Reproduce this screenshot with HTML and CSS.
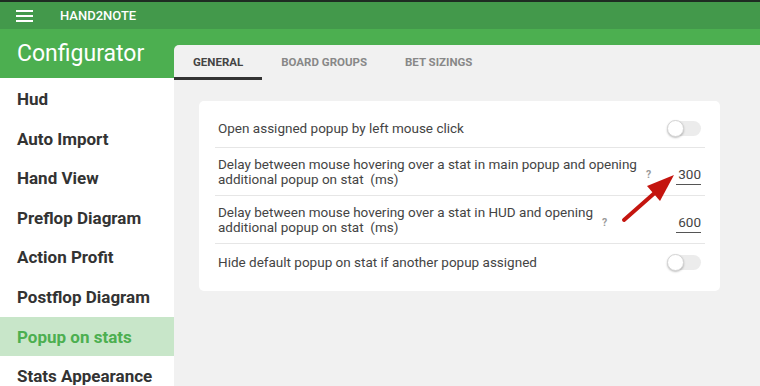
FILE: index.html
```html
<!DOCTYPE html>
<html lang="en">
<head>
    <meta charset="UTF-8">
    <title>Hand2Note - Configurator</title>
    <link rel="stylesheet" href="styles.css">
</head>
<body>
    <div class="strip"></div>
    <header class="appbar">
        <span class="burger"><i></i><i></i><i></i></span>
        <span class="brand">HAND2NOTE</span>
    </header>

    <div class="main">
        <aside class="sidebar">
            <h1 class="title">Configurator</h1>
            <nav class="nav">
                <a class="nav-item">Hud</a>
                <a class="nav-item">Auto Import</a>
                <a class="nav-item">Hand View</a>
                <a class="nav-item">Preflop Diagram</a>
                <a class="nav-item">Action Profit</a>
                <a class="nav-item">Postflop Diagram</a>
                <a class="nav-item active">Popup on stats</a>
                <a class="nav-item">Stats Appearance</a>
            </nav>
        </aside>

        <section class="content">
            <div class="head">
                <div class="tabs">
                    <span class="tab active">General</span>
                    <span class="tab">Board Groups</span>
                    <span class="tab">Bet Sizings</span>
                </div>
            </div>

            <div class="body">
                <div class="card">
                    <div class="row">
                        <span class="label">Open assigned popup by left mouse click</span>
                        <span class="toggle"></span>
                    </div>
                    <div class="row tall">
                        <span class="label">Delay between mouse hovering over a stat in main popup and opening<br>additional popup on stat&nbsp; (ms)</span>
                        <span class="help">?</span>
                        <span class="num">300</span>
                    </div>
                    <div class="row tall">
                        <span class="label">Delay between mouse hovering over a stat in HUD and opening<br>additional popup on stat&nbsp; (ms)</span>
                        <span class="help">?</span>
                        <span class="num">600</span>
                    </div>
                    <div class="row">
                        <span class="label">Hide default popup on stat if another popup assigned</span>
                        <span class="toggle"></span>
                    </div>
                </div>
            </div>

            <!-- red pointer drawn over the card -->
            <svg class="arrow" width="70" height="60" viewBox="0 0 70 60">
                <line x1="4" y1="51" x2="38" y2="21" stroke="#c4150f" stroke-width="4" stroke-linecap="round"/>
                <polygon points="54,6 27,17 40,32" fill="#c4150f"/>
            </svg>
        </section>
    </div>
</body>
</html>
```

FILE: styles.css
```css
body {
    margin: 0;
    font-family: Roboto, "Liberation Sans", sans-serif;
    background: #f1f1f1;
    width: 760px;
    height: 386px;
    overflow: hidden;
}
.strip {
    height: 2px;
    background: #1e2b22;
}
.appbar {
    height: 27px;
    background: #43994b;
    display: flex;
    align-items: center;
    padding-left: 16px;
}
.burger {
    display: flex;
    flex-direction: column;
    gap: 3px;
    width: 17px;
}
.burger i {
    display: block;
    height: 2px;
    background: #fff;
}
.brand {
    margin-left: 27px;
    color: #fff;
    font-size: 13px;
    font-weight: 500;
}
.main {
    display: flex;
    position: relative;
}
.sidebar {
    width: 174px;
    flex: none;
    background: #fff;
    height: 357px;
}
.title {
    margin: 0;
    height: 49px;
    background: #4caf50;
    color: #fff;
    font-size: 23px;
    font-weight: 400;
    padding-left: 17px;
    line-height: 49px;
    box-sizing: border-box;
}
.nav {
    padding-top: 1px;
}
.nav-item {
    display: block;
    height: 39.6px;
    line-height: 40px;
    padding-left: 17px;
    font-size: 17px;
    font-weight: 700;
    color: #333;
}
.nav-item.active {
    background: #c8e6c9;
    color: #4caf50;
}
.content {
    flex: 1;
    position: relative;
}
.head {
    background: #4caf50;
    padding-top: 16px;
}
.tabs {
    background: #f1f1f1;
    border-top-left-radius: 5px;
    display: flex;
    height: 35px;
}
.tab {
    padding: 0 19px;
    font-size: 11.5px;
    font-weight: 700;
    text-transform: uppercase;
    color: #888;
    line-height: 34px;
    border-bottom: 3px solid transparent;
}
.tab.active {
    color: #444;
    border-bottom-color: #333;
}
.body {
    padding: 21px 40px 0 25px;
}
.card {
    background: #fff;
    border-radius: 5px;
    padding: 9px 15px 10px 16px;
}
.row {
    display: flex;
    align-items: center;
    min-height: 37px;
    border-bottom: 1px solid #e6e6e6;
    padding-right: 4px;
    color: #444;
    font-size: 13.5px;
    line-height: 15px;
}
.row:last-child {
    border-bottom: none;
}
.row.tall {
    padding-top: 9px;
    padding-bottom: 8px;
    min-height: 0;
}
.label {
    padding-left: 3px;
    margin-right: auto;
}
.row.tall .label {
    margin-right: 0;
}
.help {
    margin-left: 9px;
    margin-right: auto;
    font-size: 10.5px;
    font-weight: 700;
    color: #999;
    padding-top: 4px;
}
.num {
    width: 25px;
    text-align: right;
    border-bottom: 1px solid #555;
    padding-bottom: 2px;
    margin-top: 8px;
}
.toggle {
    position: relative;
    width: 33px;
    height: 15px;
    border-radius: 8px;
    background: #ececec;
}
.toggle::before {
    content: "";
    position: absolute;
    left: -1px;
    top: -1px;
    width: 15px;
    height: 15px;
    border-radius: 50%;
    background: #fff;
    border: 1px solid #d4d4d4;
    box-shadow: 0 1px 2px rgba(0, 0, 0, 0.25);
}
.arrow {
    position: absolute;
    left: 446px;
    top: 140px;
}
```
